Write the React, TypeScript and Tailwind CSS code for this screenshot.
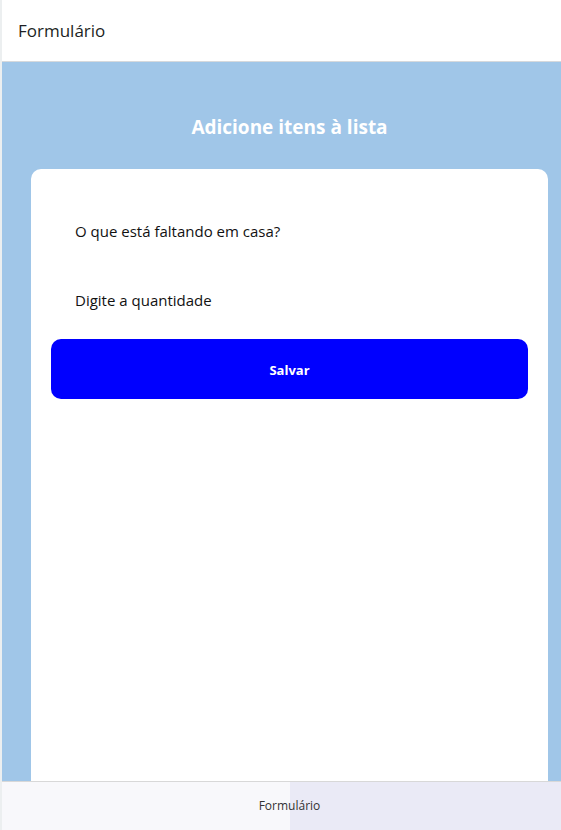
import React from 'react';

const font = { fontFamily: '"Open Sans", "Noto Sans", sans-serif' };

export default function App() {
  return (
    <div className="h-screen flex flex-col overflow-hidden border-l-2 border-[#eceff0] bg-white" style={font}>
      <header className="h-[62px] shrink-0 flex items-center px-4 bg-white border-b border-[#d6d9dc]">
        <h1 className="text-[17px] text-[#1c1f24]">Formulário</h1>
      </header>

      <main className="flex-1 min-h-0 bg-[#a0c6e8] pl-[29px] pt-[53px]">
        <h2 className="w-[517px] text-center text-white font-bold text-[19px] leading-6">Adicione itens à lista</h2>
        <div className="w-[517px] h-full mt-[30px] bg-white rounded-[10px] px-5 pt-8 flex flex-col gap-[9px]">
          <input
            className="h-[60px] pl-6 text-[15px] text-black placeholder:text-[#111] outline-none bg-transparent"
            placeholder="O que está faltando em casa?"
          />
          <input
            className="h-[60px] pl-6 text-[15px] text-black placeholder:text-[#111] outline-none bg-transparent"
            placeholder="Digite a quantidade"
          />
          <button className="h-[60px] rounded-[10px] bg-[#0000ff] text-white font-bold text-[13px] pt-[3px]">Salvar</button>
        </div>
      </main>

      <footer className="h-[49px] shrink-0 border-t border-[#d8d8d8] flex items-center justify-center bg-[linear-gradient(to_right,#f8f8fb_288px,#eaeaf6_288px)]">
        <span className="text-[12px] text-[#333] pl-4">Formulário</span>
      </footer>
    </div>
  );
}
